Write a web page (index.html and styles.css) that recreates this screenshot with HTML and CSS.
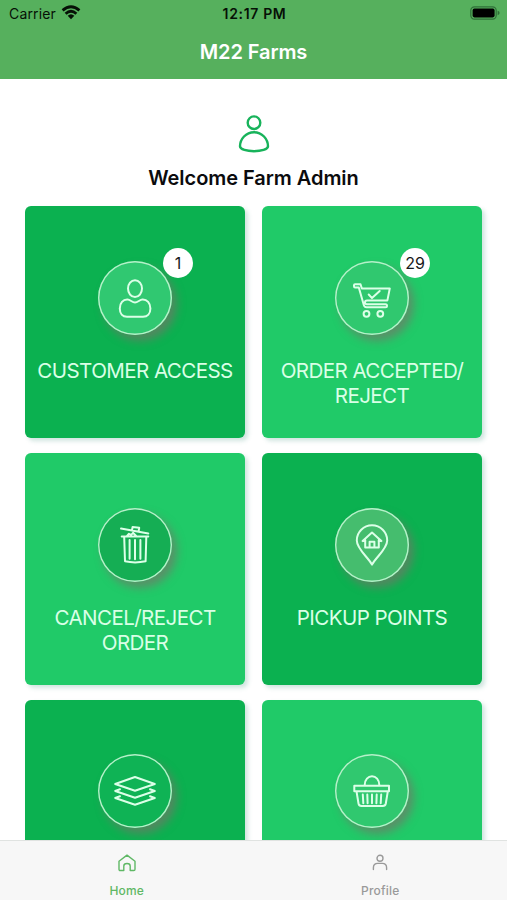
FILE: index.html
```html
<!DOCTYPE html>
<html lang="en">
<head>
<meta charset="utf-8">
<title>M22 Farms</title>
<link rel="stylesheet" href="styles.css">
</head>
<body>
<div class="app">
  <header class="header">
    <div class="status">
      <div class="carrier"><span>Carrier</span>
        <svg class="wifi" width="20" height="15" viewBox="0 0 20 15" fill="none" stroke="#061006" stroke-width="2.8"><path d="M1.6 5.4Q10-2 18.4 5.4M4.6 8.7Q10 3.8 15.4 8.7"/><path d="M6.7 10.8Q10 7.8 13.3 10.8L10 14.2Z" fill="#061006" stroke="none"/></svg>
      </div>
      <div class="time">12:17 PM</div>
      <svg class="battery" width="30" height="14" viewBox="0 0 30 14"><rect x="0.8" y="0.8" width="25.4" height="12.4" rx="3.6" fill="none" stroke="#2f7038" stroke-width="1.2"/><rect x="2.6" y="2.6" width="22" height="8.8" rx="1.8" fill="#000"/><path d="M27.6 4.8q2 .6 2 2.2t-2 2.2z" fill="#2f7038"/></svg>
    </div>
    <h1 class="title">M22 Farms</h1>
  </header>
  <main class="content">
    <svg class="avatar" width="34" height="40" viewBox="0 0 34 40" fill="none" stroke="#18b35b" stroke-width="2.4"><circle cx="17" cy="8.7" r="6.3"/><path d="M17 18.2C9 18.2 3 25 3 32.3C3 38.8 31 38.8 31 32.3C31 25 25 18.2 17 18.2Z"/></svg>
    <h2 class="welcome">Welcome Farm Admin</h2>
    <div class="grid">
      <section class="card dark">
        <div class="disc mint">
          <svg viewBox="0 0 74 74"><ellipse cx="37" cy="27.6" rx="7" ry="8.4"/><path d="M29.5 38.6C25 38.4 21.8 42 21.8 47.5C21.8 52.5 24.5 55.7 29 55.7H45C49.5 55.7 52.4 52.5 52.4 47.5C52.4 42 49 38.4 44.5 38.6C41.5 38.8 40 41.4 37 41.4C34 41.4 32.5 38.8 29.5 38.6Z"/></svg>
          <span class="badge">1</span>
        </div>
        <p class="label">CUSTOMER ACCESS</p>
      </section>
      <section class="card light">
        <div class="disc fresh">
          <svg viewBox="0 0 74 74"><path d="M25.5 23.2H20Q19 23.2 19 24.2V25.2Q19 26.4 20 26.4H23.8L28.8 44Q29.5 46.2 31.5 46.2H50.5Q52 46.2 52 44.7Q52 43.2 50.5 43.2H31.8Q30 43.2 30 41.2Q30 39.4 32 39.4H52.4L54.8 27.4H26.8L25.5 23.2M33.7 33.5L37 37.1L44.7 30"/><circle cx="31.5" cy="52.8" r="2.9"/><circle cx="45.3" cy="52.8" r="2.9"/></svg>
          <span class="badge">29</span>
        </div>
        <p class="label">ORDER ACCEPTED/<br>REJECT</p>
      </section>
      <section class="card light">
        <div class="disc deep">
          <svg viewBox="0 0 74 74"><path d="M23 20.6L50.3 25.6M34 22.3L34.6 19L41.2 19.8L40.6 23.5M23.7 28.6H50.3M26.2 29L27 53.3Q37 55.5 47.6 53.3L48.3 29M28.8 28.2L31 25.8L33.2 26.8L35 24.8L38.2 28"/><path d="M31.6 32V50.8M37 32V51.3M42.4 32V50.8"/></svg>
        </div>
        <p class="label">CANCEL/REJECT<br>ORDER</p>
      </section>
      <section class="card dark">
        <div class="disc sage">
          <svg viewBox="0 0 74 74"><path d="M37 56.6C33 49 21.8 41 21.8 32.5A15.2 15.2 0 0 1 52.2 32.5C52.2 41 41 49 37 56.6Z"/><path d="M27.6 33.1L37 24.6L46.4 33.1M30.2 32V39.5H43.8V32M34.6 39.5V33.8H39.4V39.5M27.6 33.1H30.4M43.6 33.1H46.4"/></svg>
        </div>
        <p class="label">PICKUP POINTS</p>
      </section>
      <section class="card dark">
        <div class="disc clear">
          <svg viewBox="0 0 74 74"><path d="M37 23L56.8 30L37 36.7L17.2 30ZM22 35.2L17.2 37L37 43.7L56.8 37L52 35.2M22 42.2L17.2 44L37 50.7L56.8 44L52 42.2"/></svg>
        </div>
      </section>
      <section class="card light">
        <div class="disc fresh">
          <svg viewBox="0 0 74 74"><path d="M19.3 31.8H54V37.2H19.3ZM21.5 37.4L23.5 49.5Q24 52 26.5 52H47.8Q50.3 52 50.8 49.5L52.8 37.4M29.6 31.5C29.6 19.3 44.4 19.3 44.4 31.5M27.8 40.5L28.3 49.2M32.3 40.5L32.6 49.2M37 40.5V49.2M41.7 40.5L41.4 49.2M46.2 40.5L45.7 49.2"/></svg>
        </div>
      </section>
    </div>
  </main>
  <nav class="tabs">
    <div class="tab active">
      <svg width="18" height="18" viewBox="0 0 18 18"><path d="M1 7.2L9 1.1L17 7.2V15.3Q17 16.5 15.8 16.5H12.2V12Q12.2 9.5 9 9.5Q5.8 9.5 5.8 12V16.5H2.2Q1 16.5 1 15.3Z"/></svg>
      <span>Home</span>
    </div>
    <div class="tab">
      <svg width="18" height="18" viewBox="0 0 18 18"><circle cx="9" cy="4.3" r="3"/><path d="M2.4 15.6V13.8Q2.4 9.4 6.8 9.4H11.2Q15.6 9.4 15.6 13.8V15.6"/></svg>
      <span>Profile</span>
    </div>
  </nav>
</div>
</body>
</html>
```
FILE: styles.css
```css
* { box-sizing: border-box; }
body {
  margin: 0;
  background: #fff;
  font-family: Inter, "Liberation Sans", sans-serif;
}
h1, h2, p { margin: 0; }
.app {
  width: 507px;
  height: 900px;
  display: flex;
  flex-direction: column;
  overflow: hidden;
}
.header {
  height: 79px;
  flex: none;
  background: #56b05d;
}
.status {
  display: grid;
  grid-template-columns: 1fr auto 1fr;
  align-items: center;
  height: 27px;
  padding: 0 7px 0 9px;
  color: #061006;
}
.carrier {
  display: flex;
  align-items: center;
  gap: 5px;
  font-size: 14px;
  letter-spacing: 0.15px;
}
.wifi { margin-top: -2px; }
.time {
  font-size: 14px;
  font-weight: 600;
  letter-spacing: 0.65px;
  line-height: 27px;
}
.battery { justify-self: end; margin-top: -1px; }
.title {
  color: #fff;
  font-size: 20px;
  font-weight: 600;
  letter-spacing: -0.1px;
  line-height: 51px;
  text-align: center;
}
.content {
  flex: 1;
  min-height: 0;
  overflow: hidden;
  display: flex;
  flex-direction: column;
  align-items: center;
  padding-top: 35px;
}
.avatar { flex: none; }
.welcome {
  flex: none;
  margin-top: 8px;
  height: 44.2px;
  font-size: 20px;
  font-weight: 600;
  letter-spacing: -0.05px;
  line-height: 32px;
  color: #0b0b0d;
}
.grid {
  flex: none;
  display: grid;
  grid-template-columns: 220px 220px;
  grid-auto-rows: 232px;
  gap: 14.7px 17px;
}
.card {
  display: flex;
  flex-direction: column;
  align-items: center;
  padding-top: 54.8px;
  border-radius: 6px;
  box-shadow: 3px 3px 4px rgba(70, 150, 130, 0.25);
}
.dark { background: #0bb150; }
.light { background: #20ca68; }
.disc {
  position: relative;
  width: 74px;
  height: 74px;
  flex: none;
  border-radius: 50%;
  box-shadow: inset 0 0 0 1.4px #b5f1c9, 5px 6px 9px rgba(120, 115, 105, 0.65);
}
.disc svg {
  display: block;
  width: 74px;
  height: 74px;
  fill: none;
  stroke: #dcffe8;
  stroke-width: 2;
  stroke-linejoin: round;
  stroke-linecap: round;
}
.mint { background: #30c871; }
.fresh { background: #30c86f; }
.deep { background: #15ae54; }
.sage { background: #45bd6e; }
.clear { background: #0fb355; }
.badge {
  position: absolute;
  top: -12.5px;
  left: 65px;
  width: 30px;
  height: 30px;
  border-radius: 50%;
  background: #fff;
  color: #18181a;
  font-size: 16px;
  line-height: 30px;
  text-align: center;
}
.label {
  margin-top: 24.4px;
  color: #d9ffe6;
  font-size: 20.6px;
  font-weight: 400;
  letter-spacing: -0.6px;
  line-height: 24.5px;
  text-align: center;
  white-space: nowrap;
}
.tabs {
  flex: none;
  height: 60px;
  display: grid;
  grid-template-columns: 1fr 1fr;
  background: #f7f7f7;
  border-top: 1px solid #e0e3e1;
}
.tab {
  display: flex;
  flex-direction: column;
  align-items: center;
  padding-top: 13px;
  color: #9a9a9a;
  font-size: 12px;
  font-weight: 500;
  letter-spacing: 0.2px;
  line-height: 16px;
}
.tab svg {
  fill: none;
  stroke: currentColor;
  stroke-width: 1.4;
  stroke-linejoin: round;
  stroke-linecap: round;
}
.tab span { margin-top: 11px; }
.tab.active { color: #5fb865; }
```
